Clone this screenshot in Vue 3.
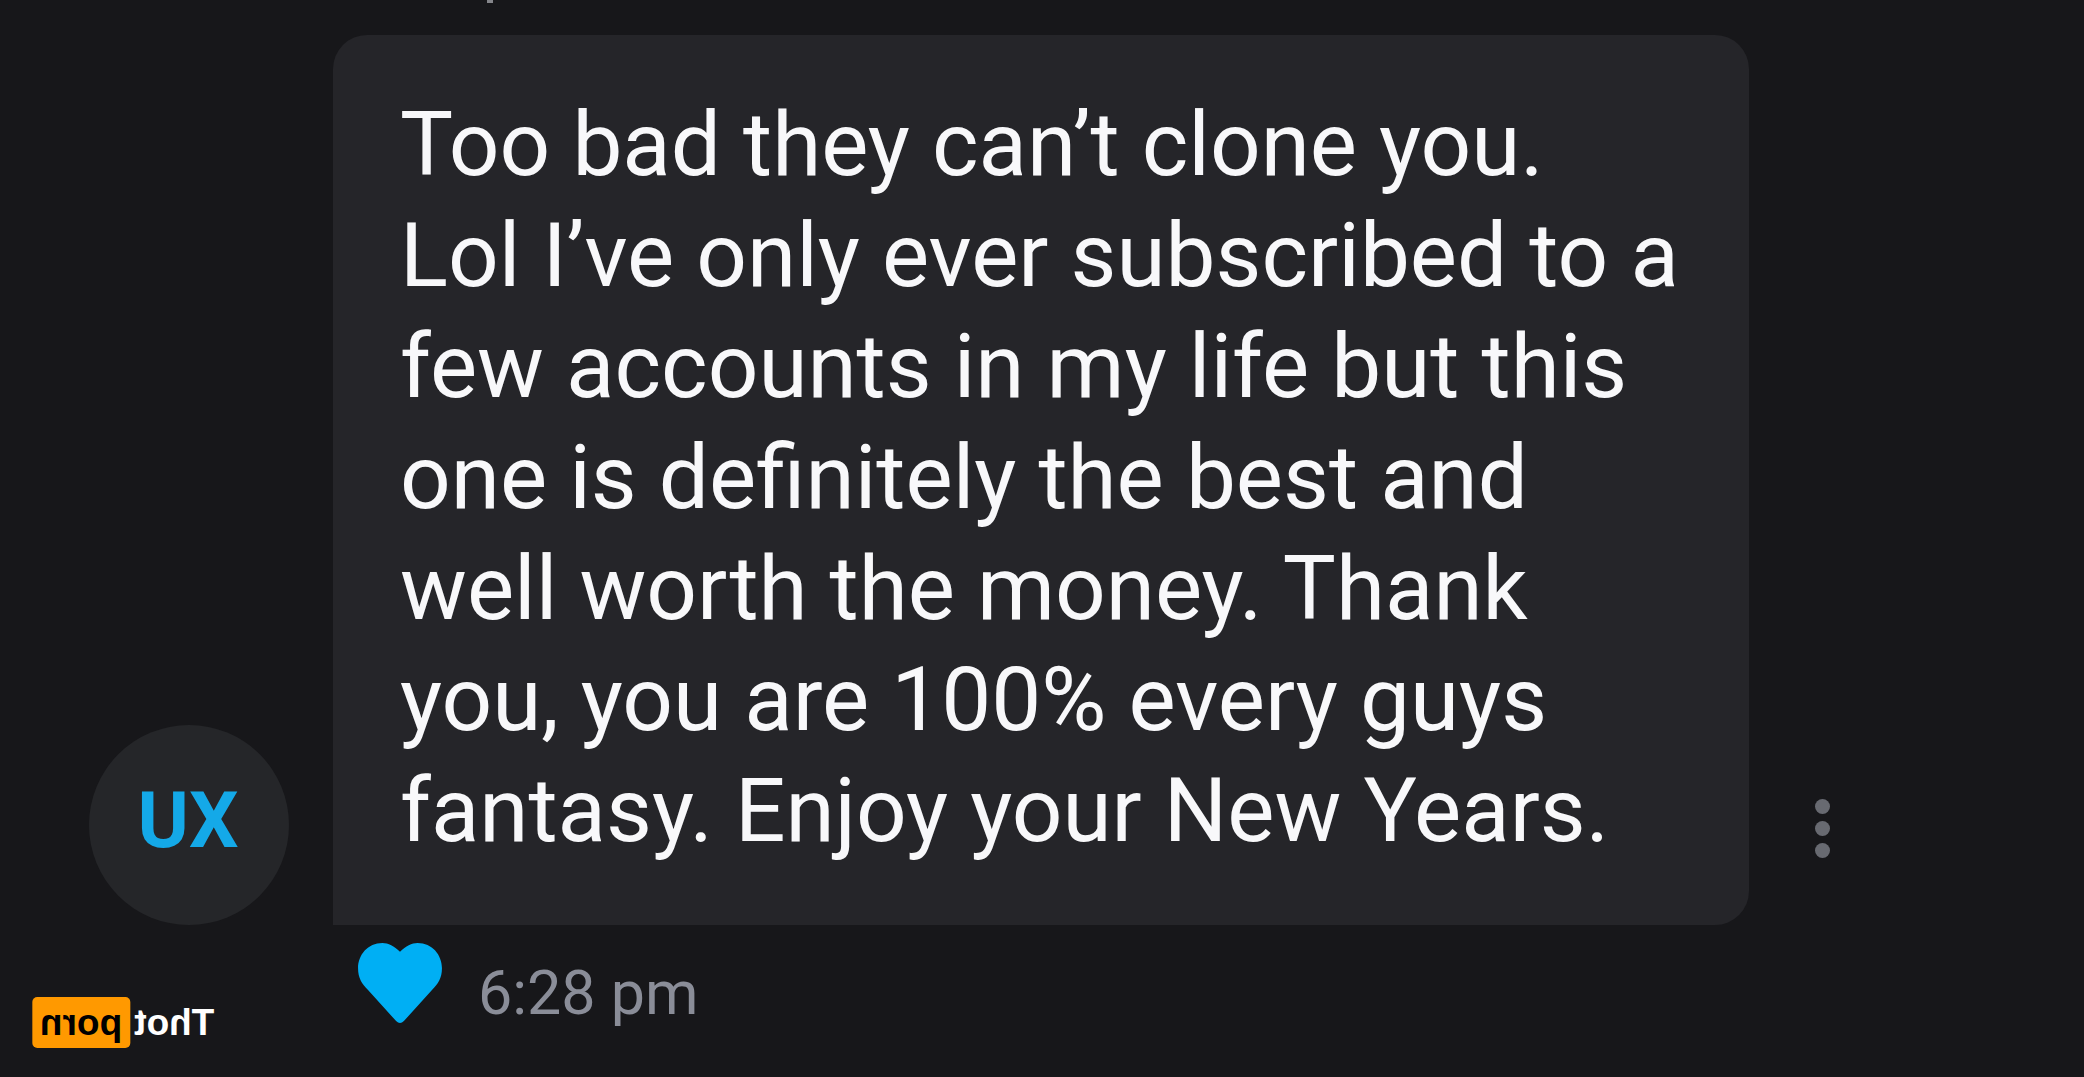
<script setup>
const message = {
  initials: 'UX',
  time: '6:28 pm',
  lines: [
    'Too bad they can’t clone you.',
    'Lol I’ve only ever subscribed to a',
    'few accounts in my life but this',
    'one is definitely the best and',
    'well worth the money. Thank',
    'you, you are 100% every guys',
    'fantasy. Enjoy your New Years.',
  ],
}
</script>

<template>
  <main class="chat">
    <div class="previous" aria-hidden="true"></div>
    <article class="message">
      <div class="avatar">{{ message.initials }}</div>
      <p class="bubble">{{ message.lines.join('\n') }}</p>
      <button class="menu" type="button" aria-label="Message options">
        <span class="dot"></span>
        <span class="dot"></span>
        <span class="dot"></span>
      </button>
    </article>
    <footer class="meta">
      <button class="like" type="button" aria-label="Like">
        <svg viewBox="0 0 86 82" width="84" height="80" aria-hidden="true">
          <path
            d="M43 9C37 3 31 0 25 0C10 0 0 12 0 26C0 36 4 42 10 48L39 80Q43 84 47 80L76 48C82 42 86 36 86 26C86 12 76 0 61 0C55 0 49 3 43 9Z"
            fill="#00aff4"
          />
        </svg>
      </button>
      <time class="time">{{ message.time }}</time>
    </footer>
    <div class="watermark">
      <span>Thot</span>
      <span class="tag">porn</span>
    </div>
  </main>
</template>

<style>
body {
  margin: 0;
  background: #17171a;
}
</style>

<style scoped>
.chat {
  position: relative;
  box-sizing: border-box;
  min-height: 100vh;
  overflow: hidden;
  background: #17171a;
  font-family: Roboto, "Liberation Sans", sans-serif;
}

.previous {
  width: 6px;
  height: 3px;
  margin: 0 0 32px 487px;
  background: #85868b;
}

.message {
  display: flex;
  align-items: flex-end;
  padding-left: 89px;
}

.avatar {
  box-sizing: border-box;
  flex: none;
  width: 200px;
  height: 200px;
  margin-right: 44px;
  padding-right: 2px;
  border-radius: 50%;
  background: #252629;
  color: #14a9e8;
  font-size: 78px;
  font-weight: 700;
  line-height: 192px;
  text-align: center;
}

.bubble {
  box-sizing: border-box;
  flex: none;
  width: 71%;
  margin: 0;
  padding: 54px 0 59px 67px;
  border-radius: 34px 34px 34px 0;
  background: #252529;
  color: #f8f8fa;
  font-size: 89px;
  line-height: 111px;
  white-space: pre;
}

.menu {
  display: flex;
  flex-direction: column;
  gap: 7px;
  margin: 0 0 67px 66px;
  padding: 0;
  border: 0;
  background: none;
}

.dot {
  width: 15px;
  height: 15px;
  border-radius: 50%;
  background: #686a71;
}

.meta {
  display: flex;
  align-items: flex-start;
  gap: 36px;
  padding: 18px 0 0 358px;
}

.like {
  height: 80px;
  padding: 0;
  border: 0;
  background: none;
}

.time {
  padding-top: 14px;
  color: #8a8d98;
  font-size: 61px;
  line-height: 72px;
}

.watermark {
  position: absolute;
  bottom: 29px;
  left: 32px;
  display: flex;
  align-items: center;
  gap: 4px;
  transform: scaleX(-1);
  color: #fff;
  font-family: "Liberation Sans", Arial, sans-serif;
  font-size: 37px;
  font-weight: 700;
  line-height: 51px;
}

.tag {
  padding: 0 8px;
  border-radius: 5px;
  background: #ff9900;
  color: #000;
}
</style>
